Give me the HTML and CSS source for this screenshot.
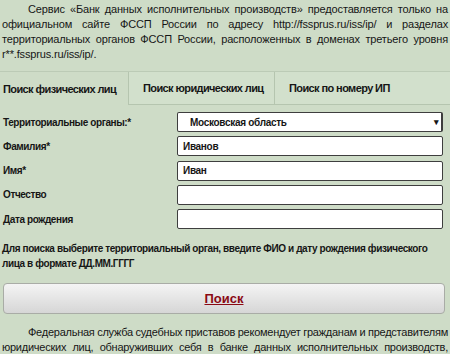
FILE: index.html
```html
<!DOCTYPE html>
<html lang="ru">
<head>
    <meta charset="UTF-8">
    <meta name="viewport" content="width=device-width, initial-scale=1.0">
    <link rel="stylesheet" href="styles.css">
</head>
<body>
    <p class="notice">
        Сервис «Банк данных исполнительных производств» предоставляется только на официальном сайте ФССП России по адресу http://fssprus.ru/iss/ip/ и разделах территориальных органов ФССП России, расположенных в доменах третьего уровня r**.fssprus.ru/iss/ip/.
    </p>

    <div class="tabs">
        <div class="tab active">Поиск физических лиц</div>
        <div class="tab">Поиск юридических лиц</div>
        <div class="tab">Поиск по номеру ИП</div>
    </div>

    <form class="search-form" onsubmit="return false">
        <div class="form-row">
            <label>Территориальные органы:*</label>
            <div class="select-box">
                <span>Московская область</span>
                <span class="arrow">▾</span>
            </div>
        </div>
        <div class="form-row">
            <label>Фамилия*</label>
            <input type="text" value="Иванов">
        </div>
        <div class="form-row">
            <label>Имя*</label>
            <input type="text" value="Иван">
        </div>
        <div class="form-row">
            <label>Отчество</label>
            <input type="text">
        </div>
        <div class="form-row">
            <label>Дата рождения</label>
            <input type="text">
        </div>

        <p class="hint">Для поиска выберите территориальный орган, введите ФИО и дату рождения физического лица в формате ДД.ММ.ГГГГ</p>

        <button class="search-btn" type="submit">Поиск</button>
    </form>

    <p class="notice notice-bottom">
        Федеральная служба судебных приставов рекомендует гражданам и представителям юридических лиц, обнаруживших себя в банке данных исполнительных производств, принять меры к погашению задолженности.
    </p>
</body>
</html>
```

FILE: styles.css
```css
body {
    font-family: "Liberation Sans", Arial, sans-serif;
    font-size: 11px;
    color: #161616;
    margin: 0;
    padding: 0 2px;
    background-color: #cedcc7;
}
.notice {
    margin: 2px 0 0;
    line-height: 15px;
    letter-spacing: -0.15px;
    text-indent: 26px;
    text-align: justify;
}
.notice-bottom {
    margin-top: 11px;
    letter-spacing: -0.25px;
    word-spacing: -0.5px;
}
.tabs {
    display: flex;
    margin: 9px -2px 0;
    height: 33px;
    border-top: 1px solid #bccbb6;
    font-size: 11px;
    letter-spacing: -0.6px;
}
.tab {
    display: flex;
    align-items: center;
    padding: 0 14px;
    font-weight: bold;
    white-space: nowrap;
    background-color: #d2e0cc;
    border-left: 1px solid #b5c5af;
    border-bottom: 1px solid #b5c5af;
}
.tab.active {
    width: 128px;
    padding: 0 3px;
    box-sizing: border-box;
    background-color: #cedcc7;
    border-left: none;
    border-bottom: none;
}
.tab:nth-child(2) {
    width: 146px;
    box-sizing: border-box;
}
.tab:last-child {
    flex: 1;
}
.search-form {
    margin-top: 7px;
    font-size: 10px;
    letter-spacing: -0.4px;
}
.form-row {
    display: grid;
    grid-template-columns: 175px 266px;
    align-items: center;
    height: 20px;
    margin-bottom: 4.25px;
}
.form-row label {
    font-weight: bold;
    padding-left: 1px;
}
.form-row input,
.select-box {
    height: 20px;
    box-sizing: border-box;
    margin: 0;
    border: 1px solid #3e3e3e;
    border-radius: 2px;
    background: #fff;
    font-family: inherit;
    font-size: 10px;
    font-weight: bold;
    letter-spacing: -0.3px;
    color: #161616;
    padding: 0 5px;
}
.select-box {
    display: flex;
    align-items: center;
    justify-content: space-between;
    padding: 0 2px 0 12px;
    border-right-width: 2px;
}
.arrow {
    font-size: 9px;
}
.hint {
    margin: 12px 0 0;
    line-height: 15px;
    font-weight: bold;
}
.search-btn {
    display: block;
    width: 442px;
    height: 31px;
    margin: 12px 0 0 1px;
    border: 1px solid #a9aca6;
    border-radius: 4px;
    background: linear-gradient(#f4f4f4, #e2e2e2 60%, #d6d6d6);
    font-family: inherit;
    font-size: 13px;
    font-weight: bold;
    letter-spacing: 0;
    color: #8a0a14;
    text-decoration: underline;
    cursor: pointer;
}
```
